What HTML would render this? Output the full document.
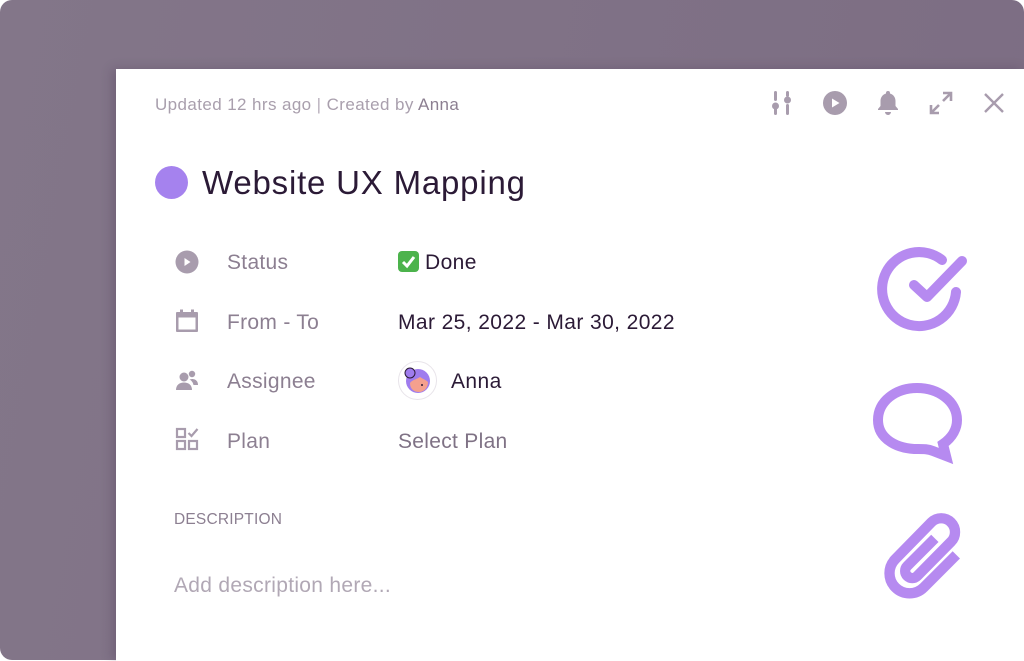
<!DOCTYPE html>
<html><head><meta charset="utf-8"><style>
*{margin:0;padding:0;box-sizing:border-box}
html,body{width:1024px;height:661px;overflow:hidden;background:#fff;font-family:"Liberation Sans",sans-serif}
.bg{position:absolute;left:0;top:0;width:1024px;height:660px;background:linear-gradient(100deg,#837689,#7c6d83);border-radius:12px}
.card{position:absolute;left:116px;top:69px;width:908px;height:592px;background:#fff;box-shadow:-4px 0 10px rgba(60,40,70,.25)}
.t{position:absolute;white-space:nowrap}
.lab{color:#8c7f91;font-size:21px;letter-spacing:.3px}
.val{color:#2b1a36;font-size:21px;letter-spacing:.4px}
svg{position:absolute}
</style></head><body>
<div class="bg"></div>
<div class="card"></div>
<div class="t" style="left:155px;top:95px;font-size:17px;letter-spacing:.4px;color:#a99fad">Updated 12 hrs ago <span style="color:#b8afbb">|</span> Created by <span style="color:#8c7f91">Anna</span></div>
<!-- top icons -->
<svg style="left:770px;top:90px" width="24" height="26" viewBox="0 0 24 26" fill="#a89cad"><rect x="4" y="1" width="3" height="10" rx="1.5"/><circle cx="5.5" cy="16" r="3.5"/><rect x="4" y="17" width="3" height="8" rx="1.5"/><rect x="16" y="1" width="3" height="6" rx="1.5"/><circle cx="17.5" cy="10" r="3.5"/><rect x="16" y="14" width="3" height="11" rx="1.5"/></svg>
<svg style="left:822px;top:90px" width="26" height="26" viewBox="0 0 26 26"><circle cx="13" cy="13" r="12" fill="#a89cad"/><path d="M10 8.5v9l7.5-4.5z" fill="#fff"/></svg>
<svg style="left:875px;top:89px" width="26" height="26" viewBox="0 0 26 26" fill="#a89cad"><path d="M13 2a2 2 0 0 1 2 2v.5c3.5 1 5.5 4 5.5 7.5v5l2.5 3v1H3v-1l2.5-3v-5C5.5 8.5 7.5 5.5 11 4.5V4a2 2 0 0 1 2-2z"/><path d="M10 23h6a3 3 0 0 1-6 0z"/></svg>
<svg style="left:928px;top:90px" width="26" height="26" viewBox="0 0 26 26" fill="none" stroke="#a89cad" stroke-width="2.6"><path d="M15 3h8v8M23 3l-8 8M11 23H3v-8M3 23l8-8"/></svg>
<svg style="left:982px;top:91px" width="24" height="24" viewBox="0 0 24 24" stroke="#a89cad" stroke-width="2.4"><path d="M3 3l18 18M21 3L3 21"/></svg>
<!-- title -->
<div style="position:absolute;left:155px;top:166px;width:33px;height:33px;border-radius:50%;background:#a582ee"></div>
<div class="t" style="left:202px;top:164px;font-size:33px;letter-spacing:.8px;color:#2b1a36">Website UX Mapping</div>
<!-- rows -->
<svg style="left:175px;top:250px" width="24" height="24" viewBox="0 0 24 24"><circle cx="12" cy="12" r="11.5" fill="#a89cad"/><path d="M9.5 8v8l6-4z" fill="#fff"/></svg>
<div class="t lab" style="left:227px;top:251px">Status</div>
<svg style="left:398px;top:251px" width="21" height="21" viewBox="0 0 21 21"><rect width="21" height="21" rx="4" fill="#4cb34c"/><path d="M5 11l4 4 7-9" fill="none" stroke="#fff" stroke-width="3"/></svg>
<div class="t val" style="left:425px;top:251px">Done</div>

<svg style="left:175px;top:309px" width="24" height="24" viewBox="0 0 24 24" fill="#a89cad"><rect x="1" y="3" width="22" height="20" rx="1"/><rect x="3.5" y="8.5" width="17" height="12" fill="#fff"/><rect x="5" y="0.5" width="3" height="4" fill="#a89cad"/><rect x="16" y="0.5" width="3" height="4"/></svg>
<div class="t lab" style="left:227px;top:311px">From - To</div>
<div class="t val" style="left:398px;top:311px">Mar 25, 2022 - Mar 30, 2022</div>

<svg style="left:175px;top:368px" width="24" height="24" viewBox="0 0 24 24" fill="#a89cad"><circle cx="9" cy="9" r="4.5"/><path d="M1 22c0-5 3.5-7.5 8-7.5s8 2.5 8 7.5z"/><circle cx="17" cy="6" r="3.2"/><path d="M17 11c3.5 0 6 2 6 6h-4.5c-.5-2.5-2-4.5-4-5.5z"/></svg>
<div class="t lab" style="left:227px;top:370px">Assignee</div>
<div style="position:absolute;left:398px;top:361px;width:39px;height:39px;border-radius:50%;border:1.5px solid #e8e4ea;background:#fff;overflow:hidden">
<svg style="left:0;top:0" width="36" height="36" viewBox="0 0 36 36"><circle cx="19" cy="19" r="12" fill="#9f7cee"/><circle cx="11" cy="11" r="5" fill="#9f7cee" stroke="#2b1a36" stroke-width="1"/><path d="M11 21c2-3 7-4 10-6 3 2 6 3 8 5 0 6-4 10-9 10s-9-3-9-9z" fill="#f4a08e"/><circle cx="23" cy="23" r="1" fill="#2b1a36"/></svg></div>
<div class="t val" style="left:451px;top:370px">Anna</div>

<svg style="left:175px;top:427px" width="24" height="24" viewBox="0 0 24 24" fill="none" stroke="#a89cad" stroke-width="2.2"><rect x="2" y="2" width="8" height="8"/><rect x="2" y="14" width="8" height="8"/><rect x="14" y="14" width="8" height="8"/><path d="M13.5 6l3 3 6-7"/></svg>
<div class="t lab" style="left:227px;top:430px">Plan</div>
<div class="t lab" style="left:398px;top:430px;color:#7f7285">Select Plan</div>

<div class="t" style="left:174px;top:511px;font-size:15.5px;letter-spacing:.2px;color:#8c7f91">DESCRIPTION</div>
<div class="t" style="left:174px;top:574px;font-size:21px;letter-spacing:.3px;color:#b1a8b5">Add description here...</div>

<!-- right accent icons -->
<svg style="left:872px;top:247px" width="96" height="90" viewBox="0 0 96 90" fill="none" stroke="#b68af0" stroke-width="10" stroke-linecap="round" stroke-linejoin="round"><path d="M70 13A37 37 0 1 0 84 45"/><path d="M42 38l13 12 35-36"/></svg>
<svg style="left:870px;top:380px" width="96" height="90" viewBox="0 0 96 90" fill="none" stroke="#b68af0" stroke-width="10" stroke-linejoin="miter"><path d="M73 64c10-7 14-16 14-24 0-19-19-32-40-32S8 21 8 40s19 29 40 29c6 0 10 0 15 2l13 5z"/></svg>
<svg style="left:872px;top:503px" width="92" height="98" viewBox="0 0 24 25.5" fill="none" stroke="#b68af0" stroke-width="2.7"><path d="M22 13.5l-8.5 8.5a5.2 5.2 0 0 1-7.4-7.4L15.5 5a3.6 3.6 0 0 1 5.1 5.1L11.8 19a1.8 1.8 0 0 1-2.6-2.6l7.2-7.2"/></svg>
</body></html>
